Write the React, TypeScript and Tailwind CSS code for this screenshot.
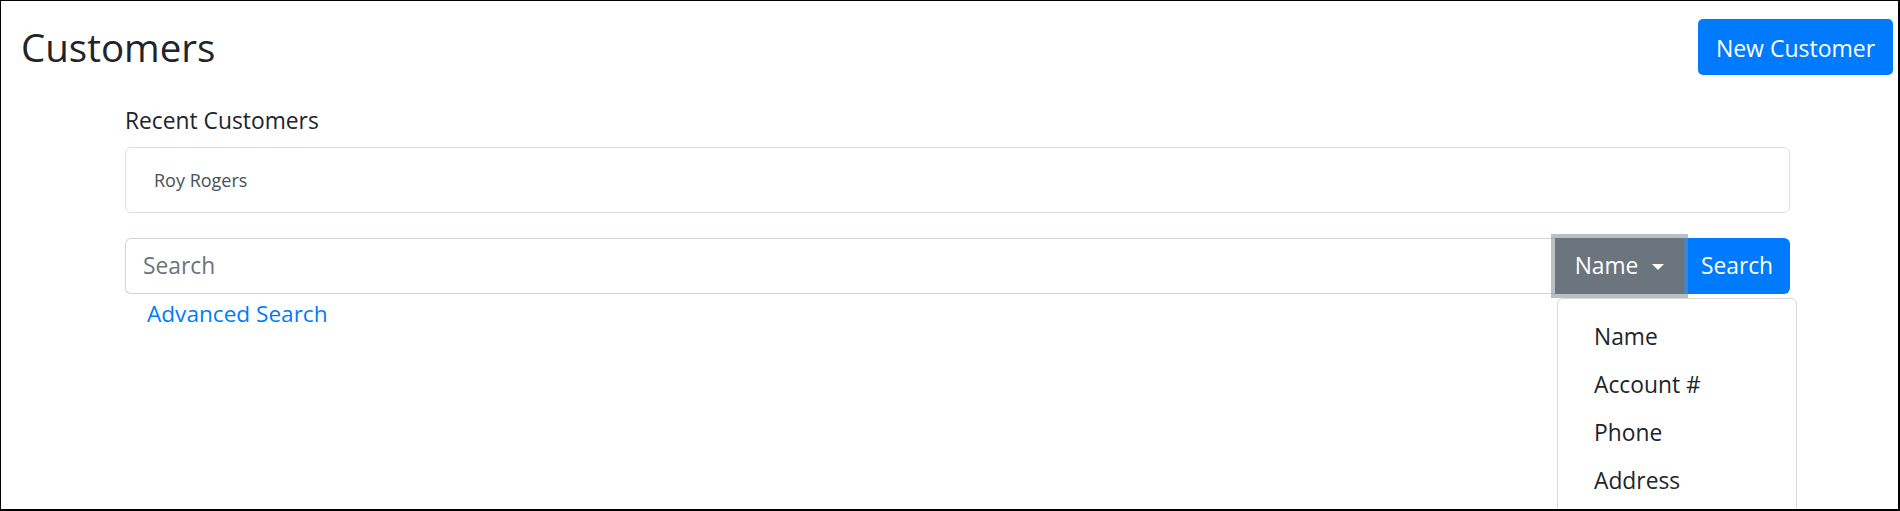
import React from "react";

const options = ["Name", "Account #", "Phone", "Address"];

function App() {
  return (
    <div
      className="w-[1900px] h-[511px] overflow-hidden bg-white border-l border-t border-r-2 border-b-2 border-black text-[#212529]"
      style={{ fontFamily: '"Open Sans", "Noto Sans", sans-serif' }}
    >
      {/* Header */}
      <div className="flex items-start justify-between pl-[20px] pr-[5px]">
        <h1 className="mt-[22px] text-[38.5px] leading-[48px] font-normal">Customers</h1>
        <button className="mt-[18px] flex h-[56px] w-[195px] items-center justify-center rounded-[5px] bg-[#007bff] pt-[1px] text-[23px] leading-[36px] text-white">
          New Customer
        </button>
      </div>

      <div className="ml-[124px] w-[1665px]">
        <div className="mt-[28px] text-[22.8px] leading-[36px]">Recent Customers</div>

        <div className="mt-[8px] rounded-[6px] border border-[#dfdfdf] px-[28px] py-[18px] text-[18px] leading-[28px] text-[#495057]">
          Roy Rogers
        </div>

        {/* Search row */}
        <div className="mt-[25px] flex h-[56px]">
          <div className="flex flex-1 items-center rounded-l-[6px] border border-r-0 border-[#ced4da] pl-[17px] pt-[1px] text-[22.8px] text-[#6c757d]">
            Search
          </div>
          <div className="relative z-10 w-[129px]">
            <button className="flex h-full w-full items-center justify-center bg-[#6c757d] pt-[1px] text-[22.8px] text-white ring-[4px] ring-[rgba(130,138,145,0.55)]">
              <span>Name</span>
              <span className="ml-[14px] mt-[1px] h-0 w-0 border-x-[6px] border-t-[6px] border-x-transparent border-t-white" />
            </button>
            <div className="absolute left-[2px] top-[calc(100%+4px)] w-[240px] rounded-[6px] border border-[#d9d9d9] bg-white pt-[14px] pb-[12px]">
              {options.map((o) => (
                <div key={o} className="px-[36px] py-[6px] text-[22.8px] leading-[36px] text-[#212529]">
                  {o}
                </div>
              ))}
            </div>
          </div>
          <button className="flex w-[106px] items-center justify-center rounded-r-[6px] bg-[#007bff] pt-[1px] text-[22.8px] text-white">
            Search
          </button>
        </div>

        <div className="mt-[2px] pl-[22px] text-[22.6px] leading-[36px] text-[#007bff]">Advanced Search</div>
      </div>
    </div>
  );
}

export default App;
